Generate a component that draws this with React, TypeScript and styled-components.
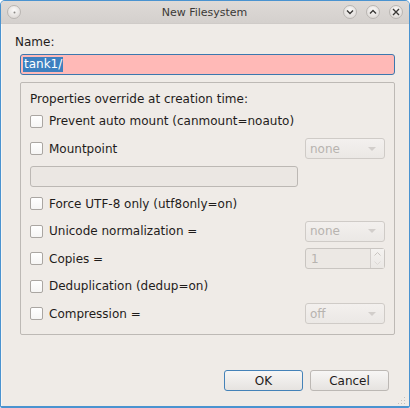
import React from "react";
import styled, { createGlobalStyle } from "styled-components";

const Global = createGlobalStyle`
  html, body { margin: 0; padding: 0; background: #ffffff; }
  body { font-family: "DejaVu Sans", "Noto Sans", sans-serif; font-size: 12px; color: #1f1c1b; }
`;

const Window = styled.div`
  position: relative;
  width: 410px;
  height: 408px;
  box-sizing: border-box;
  border: 1px solid #4a93d0;
  border-bottom-width: 2px;
  border-radius: 5px 5px 2px 2px;
  background: #efebe7;
  display: flex;
  flex-direction: column;
  overflow: hidden;
`;

const TitleBar = styled.div`
  height: 22px;
  flex: none;
  display: grid;
  grid-template-columns: 1fr auto 1fr;
  align-items: center;
  padding: 0 6px 0 5px;
  background: linear-gradient(#dedad7, #d4d0cd);
  border-bottom: 1px solid #cfcbc8;
`;

const TitleSide = styled.div<{ $end?: boolean }>`
  display: flex;
  align-items: center;
  justify-content: ${(p) => (p.$end ? "flex-end" : "flex-start")};
  gap: 9px;
  padding-left: ${(p) => (p.$end ? "0" : "1px")};
`;

const TitleText = styled.div`
  text-align: center;
  font-size: 11px;
  color: #3b3937;
  padding-top: 1px;
`;

const TitleButton = styled.div`
  width: 14px;
  height: 14px;
  border-radius: 50%;
  box-sizing: border-box;
  border: 1px solid #b9b5b2;
  background: radial-gradient(circle at 50% 35%, #fbfaf9, #dedad7 80%);
  display: flex;
  align-items: center;
  justify-content: center;
`;

const Body = styled.div`
  flex: 1;
  display: flex;
  flex-direction: column;
  padding: 10px 14px 15px 13px;
  border-left: 1px solid #f7f5f3;
`;

const NameLabel = styled.div`
  height: 16px;
  line-height: 16px;
`;

const NameInput = styled.div`
  margin: 4px 0 0 5px;
  height: 21px;
  box-sizing: border-box;
  border: 1px solid #3b78ae;
  border-radius: 3px;
  background: #ffb9b7;
  display: flex;
  align-items: center;
  padding-left: 2px;
`;

const Selected = styled.span`
  background: #3d80c0;
  color: #ffffff;
  line-height: 15px;
  padding: 0 1px;
`;

const Group = styled.div`
  margin: 7px 0 0 5px;
  height: 253px;
  box-sizing: border-box;
  border: 1px solid #bdb9b5;
  border-radius: 2px;
  padding: 8px 9px 10px 9px;
  display: flex;
  flex-direction: column;
`;

const GroupTitle = styled.div`
  height: 16px;
  line-height: 16px;
  margin-bottom: 3.5px;
`;

const Grid = styled.div`
  display: grid;
  grid-template-columns: 1fr 80px;
  grid-auto-rows: 21px;
  column-gap: 7px;
  row-gap: 6.5px;
`;

const CheckRow = styled.label<{ $span?: boolean }>`
  display: flex;
  align-items: center;
  grid-column: ${(p) => (p.$span ? "1 / span 2" : "1")};
  white-space: nowrap;
`;

const Box = styled.span`
  width: 13px;
  height: 13px;
  box-sizing: border-box;
  border: 1px solid #aaa6a2;
  border-radius: 2px;
  background: linear-gradient(#ffffff, #f6f5f4);
  margin-right: 6px;
  flex: none;
`;

const LineEdit = styled.div`
  height: 21px;
  box-sizing: border-box;
  border: 1px solid #bcb8b4;
  border-radius: 3px;
  background: #ebe7e3;
`;

const Combo = styled.div`
  grid-column: 2;
  height: 21px;
  box-sizing: border-box;
  border: 1px solid #cfcbc7;
  border-radius: 3px;
  background: linear-gradient(#f3f0ee, #ebe8e5);
  display: flex;
  align-items: center;
  padding-left: 4px;
  color: #b7b3af;
`;

const ComboText = styled.span`
  flex: 1;
`;

const Arrow = styled.span`
  width: 0;
  height: 0;
  border-left: 4px solid transparent;
  border-right: 4px solid transparent;
  border-top: 4px solid #d2cecb;
  margin-right: 8px;
`;

const Spin = styled(Combo)`
  padding-left: 0;
  background: #ece8e4;
  border-color: #c9c5c1;
`;

const SpinText = styled.span`
  flex: 1;
  padding-left: 5px;
`;

const SpinButtons = styled.div`
  width: 13px;
  align-self: stretch;
  border-left: 1px solid #d2cecb;
  display: flex;
  flex-direction: column;
  align-items: center;
  justify-content: space-around;
  background: linear-gradient(#f4f2f0, #ebe8e5);
`;

const Buttons = styled.div`
  margin-top: auto;
  display: flex;
  justify-content: flex-end;
  gap: 7px;
  padding-right: 6px;
`;

const Button = styled.div<{ $default?: boolean }>`
  width: 79px;
  height: 21px;
  box-sizing: border-box;
  border: 1px solid ${(p) => (p.$default ? "#4482b8" : "#bcb8b4")};
  border-radius: 3px;
  background: linear-gradient(#f7f6f5, #e6e3e0);
  display: flex;
  align-items: center;
  justify-content: center;
  color: #1f1c1b;
`;

const Grip = styled.div`
  position: absolute;
  right: 3px;
  bottom: 2px;
  width: 10px;
  height: 10px;
`;

const Chev = ({ up }: { up?: boolean }) => (
  <svg width="8" height="6" viewBox="0 0 8 6">
    <path
      d={up ? "M1 4.5 L4 1.5 L7 4.5" : "M1 1.5 L4 4.5 L7 1.5"}
      stroke="#3a3836"
      strokeWidth="1.4"
      fill="none"
    />
  </svg>
);

export default function App() {
  return (
    <>
      <Global />
      <Window>
        <TitleBar>
          <TitleSide>
            <TitleButton>
              <svg width="3" height="3"><circle cx="1.5" cy="1.5" r="1" fill="#8a8784" /></svg>
            </TitleButton>
          </TitleSide>
          <TitleText>New Filesystem</TitleText>
          <TitleSide $end>
            <TitleButton><Chev /></TitleButton>
            <TitleButton><Chev up /></TitleButton>
            <TitleButton>
              <svg width="8" height="8" viewBox="0 0 8 8">
                <path d="M1 1 L7 7 M7 1 L1 7" stroke="#3a3836" strokeWidth="1.4" />
              </svg>
            </TitleButton>
          </TitleSide>
        </TitleBar>
        <Body>
          <NameLabel>Name:</NameLabel>
          <NameInput>
            <Selected>tank1/</Selected>
          </NameInput>
          <Group>
            <GroupTitle>Properties override at creation time:</GroupTitle>
            <Grid>
              <CheckRow $span><Box />Prevent auto mount (canmount=noauto)</CheckRow>
              <CheckRow><Box />Mountpoint</CheckRow>
              <Combo><ComboText>none</ComboText><Arrow /></Combo>
              <LineEdit />
              <CheckRow $span><Box />Force UTF-8 only (utf8only=on)</CheckRow>
              <CheckRow><Box />Unicode normalization =</CheckRow>
              <Combo><ComboText>none</ComboText><Arrow /></Combo>
              <CheckRow><Box />Copies =</CheckRow>
              <Spin>
                <SpinText>1</SpinText>
                <SpinButtons>
                  <svg width="7" height="4" viewBox="0 0 7 4"><path d="M0.5 3.5 L3.5 0.5 L6.5 3.5" stroke="#c9c5c1" fill="none" /></svg>
                  <svg width="7" height="4" viewBox="0 0 7 4"><path d="M0.5 0.5 L3.5 3.5 L6.5 0.5" stroke="#dcd8d5" fill="none" /></svg>
                </SpinButtons>
              </Spin>
              <CheckRow $span><Box />Deduplication (dedup=on)</CheckRow>
              <CheckRow><Box />Compression =</CheckRow>
              <Combo><ComboText>off</ComboText><Arrow /></Combo>
            </Grid>
          </Group>
          <Buttons>
            <Button $default>OK</Button>
            <Button>Cancel</Button>
          </Buttons>
        </Body>
        <Grip>
          <svg width="10" height="10" viewBox="0 0 10 10" fill="#c4c0bc">
            <rect x="8" y="2" width="1" height="1" />
            <rect x="5" y="5" width="1" height="1" />
            <rect x="8" y="5" width="1" height="1" />
            <rect x="2" y="8" width="1" height="1" />
            <rect x="5" y="8" width="1" height="1" />
            <rect x="8" y="8" width="1" height="1" />
          </svg>
        </Grip>
      </Window>
    </>
  );
}
